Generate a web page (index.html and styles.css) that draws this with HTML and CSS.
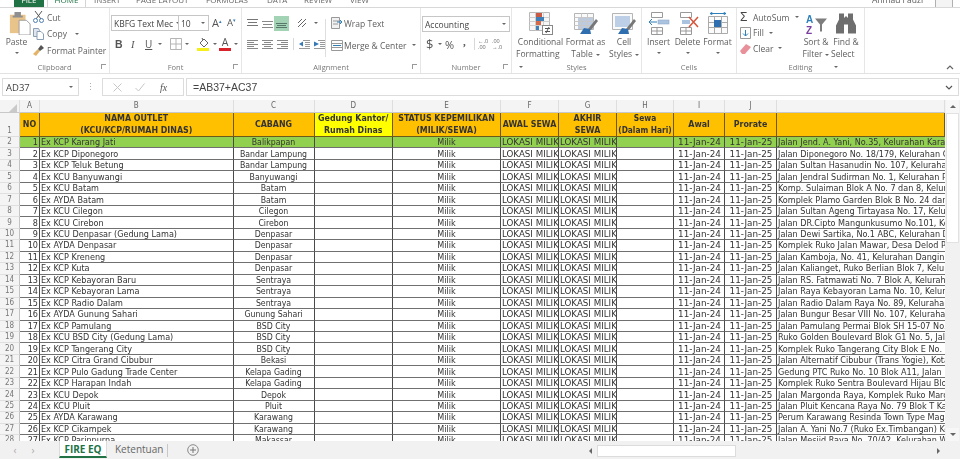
FILE: index.html
```html
<!DOCTYPE html>
<html lang="en">
<head>
<meta charset="utf-8">
<title>FIRE EQ - Excel</title>
<link rel="stylesheet" href="styles.css">
</head>
<body>
<div class="app">
  <header class="tabs">
    <span class="tab tab-file"><b>FILE</b></span>
    <span class="tab tab-home"><b>HOME</b></span>
    <span class="tab t-insert"><b>INSERT</b></span>
    <span class="tab t-page"><b>PAGE LAYOUT</b></span>
    <span class="tab t-form"><b>FORMULAS</b></span>
    <span class="tab t-data"><b>DATA</b></span>
    <span class="tab t-rev"><b>REVIEW</b></span>
    <span class="tab t-view"><b>VIEW</b></span>
    <span class="user"><b>Ahmad Fauzi</b></span>
    <span class="avatar"></span>
  </header>

  <section class="ribbon">
    <div class="group g-clip">
      <div class="body clip-body">
        <div class="big paste">
          <svg width="24" height="25" viewBox="0 0 24 25"><rect x="1" y="3" width="17" height="20" fill="#e9c48a"/><rect x="6" y="0" width="7" height="5" fill="#8f8f8f"/><rect x="4" y="4" width="11" height="2" fill="#8f8f8f"/><path d="M11 9h8l4 4v12H11z" fill="#fff" stroke="#9a9a9a"/></svg>
          <span>Paste</span><i class="caret"></i>
        </div>
        <div class="stack clip-stack">
          <div class="line"><svg width="11" height="12" viewBox="0 0 11 12"><path d="M2 0l6 8M9 0L3 8" stroke="#555" fill="none"/><circle cx="2.5" cy="9.5" r="2" fill="none" stroke="#4a7fb5"/><circle cx="8.5" cy="9.5" r="2" fill="none" stroke="#4a7fb5"/></svg><span>Cut</span></div>
          <div class="line"><svg width="11" height="12" viewBox="0 0 11 12"><path d="M.5.500h5l1 2v6h-6z" fill="#dfe6ee" stroke="#8a9fb5"/><path d="M4 3.500h4l2.500 2.500v5.500H4z" fill="#fff" stroke="#8a9fb5"/></svg><span>Copy</span><i class="caret c-copy"></i></div>
          <div class="line"><svg width="11" height="11" viewBox="0 0 11 11"><path d="M0 9l5-5 2 2-4 5z" fill="#e3b368"/><path d="M5 4l3-4 3 3-4 3z" fill="#555"/></svg><span>Format Painter</span></div>
        </div>
      </div>
      <div class="label">Clipboard<i class="launch"></i></div>
    </div>

    <div class="group g-font">
      <div class="body font-body">
        <div class="font-row1">
          <div class="combo font-name"><span>KBFG Text Mec</span><i class="caret"></i></div>
          <div class="combo font-size"><span>10</span><i class="caret"></i></div>
          <span class="grow-a">A<sup>▴</sup></span><span class="shrink-a">A<sup>▾</sup></span>
        </div>
        <div class="font-row2">
          <b class="fb">B</b><em class="fi">I</em><span class="fu">U</span><i class="caret"></i>
          <svg class="ic-border" width="12" height="12" viewBox="0 0 12 12"><path d="M.5.500h11v11H.5zM6 .5v11M.5 6h11" fill="none" stroke="#b5b5b5"/></svg><i class="caret"></i>
          <svg class="ic-fill" width="13" height="14" viewBox="0 0 13 14"><path d="M3 6l4-4 4 4-4 4z" fill="#fff" stroke="#666"/><path d="M5 1l1 2" stroke="#555"/><rect x="0" y="11" width="12" height="3" fill="#f5ef1c"/></svg><i class="caret"></i>
          <span class="fa">A<u></u></span><i class="caret"></i>
        </div>
      </div>
      <div class="label">Font<i class="launch"></i></div>
    </div>

    <div class="group g-align">
      <div class="body align-body">
        <div class="align-left">
          <div class="a-row">
            <svg width="11" height="11" viewBox="0 0 11 11"><path d="M0 1.500h11M1 4.500h9M0 7.500h11" stroke="#777"/></svg>
            <svg width="11" height="11" viewBox="0 0 11 11"><path d="M0 3.500h11M1 6.500h9M0 9.500h11" stroke="#888" /></svg>
            <span class="a-sel"><svg width="11" height="11" viewBox="0 0 11 11"><path d="M0 5.500h11M1 7.500h9M0 9.500h11" stroke="#56776a"/></svg></span>
            <svg class="a-orient" width="10" height="10" viewBox="0 0 10 10"><path d="M1 9l8-8M1 5l4-4M5 9l4-4" stroke="#666"/></svg><i class="caret"></i>
          </div>
          <div class="a-row a-row2">
            <svg width="11" height="11" viewBox="0 0 11 11"><path d="M0 1.500h11M0 3.500h7M0 5.500h11M0 7.500h7M0 9.500h11" stroke="#888"/></svg>
            <svg width="11" height="11" viewBox="0 0 11 11"><path d="M0 1.500h11M2 3.500h7M0 5.500h11M2 7.500h7M0 9.500h11" stroke="#888"/></svg>
            <svg width="11" height="11" viewBox="0 0 11 11"><path d="M0 1.500h11M4 3.500h7M0 5.500h11M4 7.500h7M0 9.500h11" stroke="#888"/></svg>
            <span class="a-sep"></span>
            <svg width="11" height="11" viewBox="0 0 11 11"><path d="M4 1.500h7M6 3.500h5M6 5.500h5M6 7.500h5M0 9.500h11" stroke="#999"/><path d="M0 5l4-2.500v5z" fill="#3478b8"/></svg>
            <svg width="11" height="11" viewBox="0 0 11 11"><path d="M4 1.500h7M6 3.500h5M6 5.500h5M6 7.500h5M0 9.500h11" stroke="#999"/><path d="M5 5L0 2.500v5z" fill="#3478b8"/></svg>
          </div>
        </div>
        <span class="v-sep"></span>
        <div class="stack wrap-stack">
          <div class="line"><svg width="12" height="12" viewBox="0 0 12 12"><path d="M.5.500h8v11h-8z" fill="#f1f1f1" stroke="#999"/><path d="M2 4h6M2 7h5" stroke="#999"/><path d="M6 5h5l-2-2M11 5L9 7" stroke="#2f7fb8" fill="none"/></svg><span>Wrap Text</span></div>
          <div class="line"><svg width="12" height="11" viewBox="0 0 12 11"><path d="M.5.500h11v10H.5zM.5 3.500h11M.5 7.500h11" fill="#fff" stroke="#999"/><path d="M2 5.500h8" stroke="#2f7fb8"/></svg><span>Merge &amp; Center</span><i class="caret c-merge"></i></div>
        </div>
      </div>
      <div class="label">Alignment<i class="launch"></i></div>
    </div>

    <div class="group g-num">
      <div class="body num-body">
        <div class="combo num-format"><span>Accounting</span><i class="caret"></i></div>
        <div class="num-row">
          <span class="n-dollar">$</span><i class="caret"></i><span class="n-pct">%</span><b class="n-comma">,</b><span class="a-sep n-sep"></span>
          <span class="n-dec"><i>←.0</i><i>.00</i></span><span class="n-dec"><i>.00</i><i>→.0</i></span>
        </div>
      </div>
      <div class="label">Number<i class="launch"></i></div>
    </div>

    <div class="group g-styles">
      <div class="body big-row styles-body">
        <div class="big w-cond">
          <svg width="24" height="23" viewBox="0 0 24 23"><path d="M.5.500h20v18H.5z" fill="#f7f7f7" stroke="#b8b8b8"/><path d="M.5 5.500h20M.5 9.500h20M.5 13.500h20M6.500.500v18M14.500.500v18" stroke="#cfcfcf"/><rect x="7" y="1" width="6" height="4" fill="#c95b45"/><rect x="7" y="5" width="8" height="4" fill="#3f7fb8"/><rect x="7" y="9" width="5" height="4" fill="#d56a4b"/><rect x="7" y="14" width="3" height="4" fill="#3f7fb8"/><rect x="13.500" y="13.500" width="10" height="9" fill="#fff" stroke="#888"/><path d="M16 16.500h5M16 19.500h5M20 15l-3 6" stroke="#555" fill="none"/></svg>
          <span>Conditional</span><span>Formatting<i class="caret"></i></span>
        </div>
        <div class="big w-fmt">
          <svg width="24" height="23" viewBox="0 0 24 23"><path d="M.5 1.500h19v16H.5z" fill="#fafafa" stroke="#b5b5b5"/><rect x="4" y="6" width="15" height="11" fill="#bccbe0"/><path d="M.5 5.500h19M.5 9.500h19M.5 13.500h19M7.500 1.500v16M13.500 1.500v16" stroke="#c8c8c8"/><path d="M14 17l8-10 2 2-7 9z" fill="#777"/><path d="M6 22l4-6 6 1 1 5z" fill="#2f6fb0"/></svg>
          <span>Format as</span><span>Table<i class="caret"></i></span>
        </div>
        <div class="big w-cell">
          <svg width="24" height="23" viewBox="0 0 24 23"><path d="M.5 1.500h20v16H.5z" fill="#fafafa" stroke="#b5b5b5"/><rect x="3" y="4" width="15" height="11" fill="#bccfe6"/><path d="M14 17l8-10 2 2-7 9z" fill="#777"/><path d="M6 22l4-6 6 1 1 5z" fill="#2f6fb0"/></svg>
          <span>Cell</span><span>Styles<i class="caret"></i></span>
        </div>
      </div>
      <div class="label">Styles</div>
    </div>

    <div class="group g-cells">
      <div class="body big-row cells-body">
        <div class="big w-ins">
          <svg width="22" height="23" viewBox="0 0 22 23"><path d="M3.500.500h11v5h-11zM3.500 15.500h11v7h-11zM9 15.500v7M3.500 19h11" fill="#fff" stroke="#999"/><rect x="10" y="8" width="11" height="4" fill="#a9c3e0" stroke="#8fa9c6" stroke-width=".6"/><path d="M9 10H1m3-3l-3 3 3 3" stroke="#2f7fb8" fill="none"/></svg>
          <span>Insert</span><i class="caret"></i>
        </div>
        <div class="big w-del">
          <svg width="22" height="23" viewBox="0 0 22 23"><path d="M3.500.500h11v5h-11zM3.500 15.500h11v7h-11zM9 15.500v7M3.500 19h11" fill="#fff" stroke="#999"/><rect x="5" y="8" width="8" height="4" fill="#a9c3e0"/><path d="M12 5l9 10M21 5l-9 10" stroke="#d5543a" stroke-width="1.500"/></svg>
          <span>Delete</span><i class="caret"></i>
        </div>
        <div class="big w-form">
          <svg width="22" height="23" viewBox="0 0 22 23"><path d="M1.500 4.500h19v17h-19zM7.500 4.500v17M14.500 4.500v17M1.500 10.500h19M1.500 15.500h19" fill="#fbfbfb" stroke="#aaa"/><rect x="7" y="8" width="7" height="7" fill="#2f6fb0"/><path d="M3 1.500h16M3 1.500l2-1v2zM19 1.500l-2-1v2z" stroke="#2f7fb8" fill="none"/></svg>
          <span>Format</span><i class="caret"></i>
        </div>
      </div>
      <div class="label">Cells</div>
    </div>

    <div class="group g-edit">
      <div class="body edit-body">
        <div class="stack edit-stack">
          <div class="line"><span class="sigma">Σ</span><span>AutoSum</span><i class="caret c-sum"></i></div>
          <div class="line"><svg width="11" height="12" viewBox="0 0 11 12"><path d="M.5.500h10v11H.5z" fill="#fff" stroke="#999"/><path d="M5.500 3v6M3 6.500l2.500 2.500L8 6.500" stroke="#2f7fb8" fill="none"/></svg><span>Fill</span><i class="caret"></i></div>
          <div class="line"><svg width="11" height="11" viewBox="0 0 11 11"><path d="M0 8l6-7 5 3-6 7H2z" fill="#e8919a"/></svg><span>Clear</span><i class="caret"></i></div>
        </div>
        <div class="big w-sort">
          <svg width="22" height="22" viewBox="0 0 22 22"><text x="1" y="10" class="az a">A</text><text x="1" y="21" class="az z">Z</text><path d="M10 6h12l-5 6v7h-2v-7z" fill="#7d7d7d"/></svg>
          <span>Sort &amp;</span><span>Filter<i class="caret"></i></span>
        </div>
        <div class="big w-find">
          <svg width="22" height="22" viewBox="0 0 22 22"><path d="M4 1h5v4h1v-1h2v1h1V1h5v6l3 6v8h-8v-9h-4v9H1v-8l3-6z" fill="#6e6e6e"/></svg>
          <span>Find &amp;</span><span>Select<i class="caret"></i></span>
        </div>
      </div>
      <div class="label">Editing</div>
    </div>

    <div class="collapse"><svg width="8" height="5" viewBox="0 0 8 5"><path d="M1 4l3-3 3 3" fill="none" stroke="#666" stroke-width="1.200"/></svg></div>
  </section>

  <section class="formula">
    <div class="namebox"><span>AD37</span><i class="caret"></i></div>
    <span class="dots">⋮</span>
    <div class="fx-box">
      <svg width="9" height="9" viewBox="0 0 9 9"><path d="M.5.500l8 8M8.500.500l-8 8" stroke="#c6c6c6"/></svg>
      <svg width="10" height="9" viewBox="0 0 10 9"><path d="M.5 5l3 3 6-7.500" stroke="#c6c6c6" fill="none"/></svg>
      <em>fx</em>
    </div>
    <div class="fbox"><span>=AB37+AC37</span><svg width="8" height="5" viewBox="0 0 8 5"><path d="M1 1l3 3 3-3" fill="none" stroke="#555" stroke-width="1.200"/></svg></div>
  </section>

  <main class="sheet-area">
    <div class="grid-wrap">
      <table class="sheet">
        <colgroup><col class="c0"><col class="ca"><col class="cb"><col class="cc"><col class="cd"><col class="ce"><col class="cf"><col class="cg"><col class="ch"><col class="ci"><col class="cj"><col class="ck"></colgroup>
        <thead>
          <tr class="letters"><th class="corner"><span class="tri"></span></th><th>A</th><th>B</th><th>C</th><th>D</th><th>E</th><th>F</th><th>G</th><th>H</th><th>I</th><th>J</th><th></th></tr>
          <tr class="head"><th class="rn">1</th><th>NO</th><th>NAMA OUTLET<br>(KCU/KCP/RUMAH DINAS)</th><th>CABANG</th><th class="yellow">Gedung Kantor/<br>Rumah Dinas</th><th>STATUS KEPEMILIKAN<br>(MILIK/SEWA)</th><th>AWAL SEWA</th><th>AKHIR<br>SEWA</th><th>Sewa<br>(Dalam Hari)</th><th>Awal</th><th>Prorate</th><th></th></tr>
        </thead>
        <tbody>
          <tr class="green"><th>2</th><td>1</td><td>Ex KCP Karang Jati</td><td>Balikpapan</td><td></td><td>Milik</td><td>LOKASI MILIK</td><td>LOKASI MILIK</td><td></td><td>11-Jan-24</td><td>11-Jan-25</td><td>Jalan Jend. A. Yani, No.35, Kelurahan Karang Jati</td></tr>
          <tr><th>3</th><td>2</td><td>Ex KCP Diponegoro</td><td>Bandar Lampung</td><td></td><td>Milik</td><td>LOKASI MILIK</td><td>LOKASI MILIK</td><td></td><td>11-Jan-24</td><td>11-Jan-25</td><td>Jalan Diponegoro No. 18/179, Kelurahan Gulak</td></tr>
          <tr><th>4</th><td>3</td><td>Ex KCP Teluk Betung</td><td>Bandar Lampung</td><td></td><td>Milik</td><td>LOKASI MILIK</td><td>LOKASI MILIK</td><td></td><td>11-Jan-24</td><td>11-Jan-25</td><td>Jalan Sultan Hasanudin No. 107, Kelurahan Kupang</td></tr>
          <tr><th>5</th><td>4</td><td>Ex KCU Banyuwangi</td><td>Banyuwangi</td><td></td><td>Milik</td><td>LOKASI MILIK</td><td>LOKASI MILIK</td><td></td><td>11-Jan-24</td><td>11-Jan-25</td><td>Jalan Jendral Sudirman No. 1, Kelurahan Pengantigan</td></tr>
          <tr><th>6</th><td>5</td><td>Ex KCU Batam</td><td>Batam</td><td></td><td>Milik</td><td>LOKASI MILIK</td><td>LOKASI MILIK</td><td></td><td>11-Jan-24</td><td>11-Jan-25</td><td>Komp. Sulaiman Blok A No. 7 dan 8, Kelurahan Batu</td></tr>
          <tr><th>7</th><td>6</td><td>Ex AYDA Batam</td><td>Batam</td><td></td><td>Milik</td><td>LOKASI MILIK</td><td>LOKASI MILIK</td><td></td><td>11-Jan-24</td><td>11-Jan-25</td><td>Komplek Plamo Garden Blok B No. 24 dan 25</td></tr>
          <tr><th>8</th><td>7</td><td>Ex KCU Cilegon</td><td>Cilegon</td><td></td><td>Milik</td><td>LOKASI MILIK</td><td>LOKASI MILIK</td><td></td><td>11-Jan-24</td><td>11-Jan-25</td><td>Jalan Sultan Ageng Tirtayasa No. 17, Kelurahan Jombang</td></tr>
          <tr><th>9</th><td>8</td><td>Ex KCU Cirebon</td><td>Cirebon</td><td></td><td>Milik</td><td>LOKASI MILIK</td><td>LOKASI MILIK</td><td></td><td>11-Jan-24</td><td>11-Jan-25</td><td>Jalan DR.Cipto Mangunkusumo No.101, Kelurahan</td></tr>
          <tr><th>10</th><td>9</td><td>Ex KCU Denpasar (Gedung Lama)</td><td>Denpasar</td><td></td><td>Milik</td><td>LOKASI MILIK</td><td>LOKASI MILIK</td><td></td><td>11-Jan-24</td><td>11-Jan-25</td><td>Jalan Dewi Sartika, No.1 ABC, Kelurahan Dauh Puri</td></tr>
          <tr><th>11</th><td>10</td><td>Ex AYDA Denpasar</td><td>Denpasar</td><td></td><td>Milik</td><td>LOKASI MILIK</td><td>LOKASI MILIK</td><td></td><td>11-Jan-24</td><td>11-Jan-25</td><td>Komplek Ruko Jalan Mawar, Desa Delod Peken</td></tr>
          <tr><th>12</th><td>11</td><td>Ex KCP Kreneng</td><td>Denpasar</td><td></td><td>Milik</td><td>LOKASI MILIK</td><td>LOKASI MILIK</td><td></td><td>11-Jan-24</td><td>11-Jan-25</td><td>Jalan Kamboja, No. 41, Kelurahan Dangin Puri</td></tr>
          <tr><th>13</th><td>12</td><td>Ex KCP Kuta</td><td>Denpasar</td><td></td><td>Milik</td><td>LOKASI MILIK</td><td>LOKASI MILIK</td><td></td><td>11-Jan-24</td><td>11-Jan-25</td><td>Jalan Kalianget, Ruko Berlian Blok 7, Kelurahan Kuta</td></tr>
          <tr><th>14</th><td>13</td><td>Ex KCP Kebayoran Baru</td><td>Sentraya</td><td></td><td>Milik</td><td>LOKASI MILIK</td><td>LOKASI MILIK</td><td></td><td>11-Jan-24</td><td>11-Jan-25</td><td>Jalan RS. Fatmawati No. 7 Blok A, Kelurahan Cilandak</td></tr>
          <tr><th>15</th><td>14</td><td>Ex KCP Kebayoran Lama</td><td>Sentraya</td><td></td><td>Milik</td><td>LOKASI MILIK</td><td>LOKASI MILIK</td><td></td><td>11-Jan-24</td><td>11-Jan-25</td><td>Jalan Raya Kebayoran Lama No. 10, Kelurahan Sukabumi</td></tr>
          <tr><th>16</th><td>15</td><td>Ex KCP Radio Dalam</td><td>Sentraya</td><td></td><td>Milik</td><td>LOKASI MILIK</td><td>LOKASI MILIK</td><td></td><td>11-Jan-24</td><td>11-Jan-25</td><td>Jalan Radio Dalam Raya No. 89, Kelurahan Gandaria</td></tr>
          <tr><th>17</th><td>16</td><td>Ex AYDA Gunung Sahari</td><td>Gunung Sahari</td><td></td><td>Milik</td><td>LOKASI MILIK</td><td>LOKASI MILIK</td><td></td><td>11-Jan-24</td><td>11-Jan-25</td><td>Jalan Bungur Besar VIII No. 107, Kelurahan Kemayoran</td></tr>
          <tr><th>18</th><td>17</td><td>Ex KCP Pamulang</td><td>BSD City</td><td></td><td>Milik</td><td>LOKASI MILIK</td><td>LOKASI MILIK</td><td></td><td>11-Jan-24</td><td>11-Jan-25</td><td>Jalan Pamulang Permai Blok SH 15-07 No. 8 Pamulang</td></tr>
          <tr><th>19</th><td>18</td><td>Ex KCU BSD City (Gedung Lama)</td><td>BSD City</td><td></td><td>Milik</td><td>LOKASI MILIK</td><td>LOKASI MILIK</td><td></td><td>11-Jan-24</td><td>11-Jan-25</td><td>Ruko Golden Boulevard Blok G1 No. 5, Jalan Pahlawan</td></tr>
          <tr><th>20</th><td>19</td><td>Ex KCP Tangerang City</td><td>BSD City</td><td></td><td>Milik</td><td>LOKASI MILIK</td><td>LOKASI MILIK</td><td></td><td>11-Jan-24</td><td>11-Jan-25</td><td>Komplek Ruko Tangerang City Blok E No. 12, Jalan</td></tr>
          <tr><th>21</th><td>20</td><td>Ex KCP Citra Grand Cibubur</td><td>Bekasi</td><td></td><td>Milik</td><td>LOKASI MILIK</td><td>LOKASI MILIK</td><td></td><td>11-Jan-24</td><td>11-Jan-25</td><td>Jalan Alternatif Cibubur (Trans Yogie), Kota Wisata</td></tr>
          <tr><th>22</th><td>21</td><td>Ex KCP Pulo Gadung Trade Center</td><td>Kelapa Gading</td><td></td><td>Milik</td><td>LOKASI MILIK</td><td>LOKASI MILIK</td><td></td><td>11-Jan-24</td><td>11-Jan-25</td><td>Gedung PTC Ruko No. 10 Blok A11, Jalan Perintis</td></tr>
          <tr><th>23</th><td>22</td><td>Ex KCP Harapan Indah</td><td>Kelapa Gading</td><td></td><td>Milik</td><td>LOKASI MILIK</td><td>LOKASI MILIK</td><td></td><td>11-Jan-24</td><td>11-Jan-25</td><td>Komplek Ruko Sentra Boulevard Hijau Blok C</td></tr>
          <tr><th>24</th><td>23</td><td>Ex KCU Depok</td><td>Depok</td><td></td><td>Milik</td><td>LOKASI MILIK</td><td>LOKASI MILIK</td><td></td><td>11-Jan-24</td><td>11-Jan-25</td><td>Jalan Margonda Raya, Komplek Ruko Margonda</td></tr>
          <tr><th>25</th><td>24</td><td>Ex KCU Pluit</td><td>Pluit</td><td></td><td>Milik</td><td>LOKASI MILIK</td><td>LOKASI MILIK</td><td></td><td>11-Jan-24</td><td>11-Jan-25</td><td>Jalan Pluit Kencana Raya No. 79 Blok T Kav 12</td></tr>
          <tr><th>26</th><td>25</td><td>Ex AYDA Karawang</td><td>Karawang</td><td></td><td>Milik</td><td>LOKASI MILIK</td><td>LOKASI MILIK</td><td></td><td>11-Jan-24</td><td>11-Jan-25</td><td>Perum Karawang Resinda Town Type Magnolia</td></tr>
          <tr><th>27</th><td>26</td><td>Ex KCP Cikampek</td><td>Karawang</td><td></td><td>Milik</td><td>LOKASI MILIK</td><td>LOKASI MILIK</td><td></td><td>11-Jan-24</td><td>11-Jan-25</td><td>Jalan A. Yani No.7 (Ruko Ex.Timbangan) Kelurahan</td></tr>
          <tr><th>28</th><td>27</td><td>Ex KCP Parinpurna</td><td>Makassar</td><td></td><td>Milik</td><td>LOKASI MILIK</td><td>LOKASI MILIK</td><td></td><td>11-Jan-24</td><td>11-Jan-25</td><td>Jalan Mesjid Raya No. 70/A2, Kelurahan Wajo</td></tr>
        </tbody>
      </table>
    </div>
    <aside class="vscroll">
      <div class="arrow"><i class="tri-up"></i></div>
      <div class="thumb"></div>
      <div class="spacer"></div>
      <div class="arrow"><i class="tri-down"></i></div>
    </aside>
  </main>

  <footer class="tabbar">
    <span class="nav">‹</span><span class="nav">›</span>
    <span class="sheet-tab active">FIRE EQ</span>
    <span class="sheet-tab">Ketentuan</span>
    <span class="tab-sep"></span>
    <svg class="plus" width="12" height="12" viewBox="0 0 12 12"><circle cx="6" cy="6" r="5.300" fill="none" stroke="#8a8a8a"/><path d="M3 6h6M6 3v6" stroke="#777"/></svg>
    <div class="hscroll">
      <i class="tri-left"></i>
      <div class="hthumb"></div>
      <i class="tri-right"></i>
    </div>
  </footer>
</div>
</body>
</html>
```

FILE: styles.css
```css
* { box-sizing: border-box; }
html, body { margin: 0; padding: 0; width: 960px; height: 459px; overflow: hidden; background: #fff; }
.app {
  width: 960px; height: 459px; display: flex; flex-direction: column; overflow: hidden;
  font-family: "Open Sans", "Noto Sans", sans-serif; font-size: 8.500px; color: #5c5c5c;
  filter: blur(.35px);
}
i { font-style: normal; }

/* title tabs (cut by the top edge) */
.tabs { height: 8px; flex: none; position: relative; display: flex; overflow: hidden; border-bottom: 1px solid #d8d8d8; }
.tab { height: 7px; line-height: 7px; font-size: 8px; flex: none; overflow: hidden; color: #666; }
.tab b { display: block; font-weight: 400; margin-top: -4px; }
.tab-file { margin-left: 14px; width: 30px; background: #217346; color: #fff; text-align: center; }
.tab-home { margin-left: 3px; width: 39px; text-align: center; color: #217346; border-left: 1px solid #d4d4d4; border-right: 1px solid #d4d4d4; height: 8px; background: #fff; position: relative; z-index: 1; }
.t-insert { margin-left: 8px; width: 42px; }
.t-page { width: 70px; }
.t-form { width: 61px; }
.t-data { width: 37px; }
.t-rev { width: 46px; }
.t-view { width: 30px; }
.user { margin-left: 492px; width: 62px; height: 7px; line-height: 7px; overflow: hidden; font-size: 8.500px; flex: none; }
.user b { display: block; font-weight: 400; margin-top: -4px; }
.avatar { width: 18px; height: 8px; border: 1px solid #b0b0b0; border-top: 0; flex: none; margin-left: 1px; background: #f4f4f4; }

/* ribbon */
.ribbon { height: 66px; flex: none; display: flex; background: #fff; border-bottom: 1px solid #e2e2e2; position: relative; }
.group { flex: none; display: flex; flex-direction: column; border-right: 1px solid #e6e6e6; height: 65px; }
.g-clip { width: 110px; } .g-font { width: 132px; } .g-align { width: 179px; } .g-num { width: 91px; } .g-styles { width: 130px; } .g-cells { width: 95px; } .g-edit { width: 128px; }
.body { flex: 1; min-height: 0; display: flex; }
.label { height: 12px; line-height: 12px; text-align: center; font-size: 7.500px; color: #777; position: relative; flex: none; }
.launch { position: absolute; right: 3px; top: 3px; width: 5px; height: 5px; border-left: 1px solid #999; border-top: 1px solid #999; }

.caret { display: inline-block; width: 0; height: 0; border-left: 2px solid transparent; border-right: 2px solid transparent; border-top: 2px solid #666; vertical-align: middle; margin-left: 3px; flex: none; }
.big { display: flex; flex-direction: column; align-items: center; line-height: 12px; color: #5e5e5e; flex: none; font-size: 8.500px; }
.big svg { height: 23px; flex: none; margin-bottom: 1px; }
.big .caret { margin-left: 3px; }
.big > .caret { margin: 4px 0 0; }
.stack { display: flex; flex-direction: column; }
.line { display: flex; align-items: center; gap: 2px; color: #5e5e5e; white-space: nowrap; }

/* clipboard */
.clip-body { padding: 4px 0 0 4px; }
.paste { width: 25px; }
.paste svg { align-self: flex-start; margin-left: 4px; margin-bottom: 1px; }
.clip-stack { margin: -1px 0 0 4px; gap: 4.500px; }
.clip-stack .line { height: 12px; gap: 3px; }
.c-copy { margin-left: 5px; }

/* font */
.font-body { flex-direction: column; padding: 7px 0 0 1px; }
.font-row1 { display: flex; align-items: center; height: 16px; }
.combo { display: flex; align-items: center; justify-content: space-between; height: 16px; border: 1px solid #c6c6c6; padding: 0 3px 0 2px; background: #fff; flex: none; color: #444; }
.font-name { width: 68px; font-size: 8.500px; white-space: nowrap; overflow: hidden; }
.font-size { width: 31px; margin-left: -1px; border-left-color: #c6c6c6; }
.grow-a, .shrink-a { font-size: 11px; color: #555; flex: none; line-height: 14px; }
.grow-a { margin-left: 3px; width: 15px; }
.shrink-a { font-size: 9.500px; width: 12px; }
.grow-a sup, .shrink-a sup { font-size: 5px; color: #3a7ab5; vertical-align: 4px; line-height: 0; }
.font-row2 { display: flex; align-items: center; height: 16px; margin-top: 5px; color: #555; }
.fb { margin-left: 4px; width: 13px; font-size: 10.500px; font-family: "Liberation Sans", sans-serif; }
.fi { width: 17px; font-size: 10.500px; padding-left: 3px; font-family: "Liberation Serif", serif; }
.fu { font-size: 10px; width: 10px; text-decoration: underline; }
.ic-border { margin-left: 8px; }
.ic-fill { margin-left: 8px; }
.fa { margin-left: 2px; width: 12px; font-size: 10.500px; line-height: 11px; text-align: center; color: #555; display: flex; flex-direction: column; }
.fa u { display: block; height: 3px; background: #d8232a; }

/* alignment */
.align-body { padding: 7px 0 0 5px; }
.align-left { width: 78px; flex: none; }
.a-row { display: flex; align-items: center; gap: 4px; height: 16px; }
.a-sel { width: 15px; height: 15px; background: #a3d3b5; display: flex; align-items: center; justify-content: center; margin-left: -3px; }
.a-orient { margin-left: 4px; }
.a-row2 { margin-top: 5px; }
.a-sep { width: 1px; height: 12px; background: #d8d8d8; flex: none; margin: 0 1px; }
.v-sep { width: 1px; height: 38px; background: #dedede; flex: none; margin: 4px 5px 0 0; }
.wrap-stack { padding-top: 2px; gap: 10px; }
.wrap-stack .line { height: 12px; gap: 1px; font-size: 8.500px; }
.c-merge { margin-left: 4px; }

/* number */
.num-body { flex-direction: column; padding: 8px 0 0 1px; }
.num-format { width: 88px; height: 16px; }
.num-row { display: flex; align-items: center; height: 16px; margin-top: 4px; padding-left: 4px; color: #555; }
.n-dollar { font-size: 13px; width: 9px; }
.n-pct { font-size: 11px; margin-left: 3px; width: 14px; }
.n-comma { font-size: 11px; line-height: 8px; height: 12px; width: 7px; margin-left: 4px; font-family: "Liberation Serif", serif; }
.n-sep { margin-left: 4px; margin-right: 3px; }
.n-dec { display: flex; flex-direction: column; font-size: 5.500px; line-height: 6px; width: 14px; color: #666; white-space: nowrap; overflow: hidden; }

/* styles, cells */
.big-row { padding-top: 4px; }
.styles-body { padding-left: 4px; }
.w-cond { width: 49px; }
.w-fmt { width: 41px; }
.w-cell { width: 30px; margin-left: 3px; }
.cells-body { padding-left: 2px; }
.w-ins { width: 29px; }
.w-del { width: 29px; }
.w-form { width: 31px; }

/* editing */
.edit-body { padding-top: 4px; }
.edit-stack { width: 64px; padding-left: 3px; margin-top: -1px; gap: 3.500px; flex: none; }
.edit-stack .line { height: 12px; }
.sigma { font-size: 12px; color: #444; width: 11px; line-height: 12px; font-family: "Liberation Sans", sans-serif; }
.c-sum { margin-left: 4px; }
.w-sort { width: 30px; }
.w-find { width: 30px; }
.az { font: 700 10px "Liberation Sans", sans-serif; }
.az.a { fill: #2f7fb8; }
.az.z { fill: #7a3fa0; }
.collapse { position: absolute; right: 6px; top: 57px; line-height: 0; }

/* formula bar */
.formula { height: 20px; flex: none; margin-top: 4px; display: flex; align-items: stretch; padding-left: 2px; color: #444; }
.namebox { width: 77px; height: 18px; border: 1px solid #dcdcdc; display: flex; align-items: center; justify-content: space-between; padding: 0 5px 0 3px; font-size: 9.500px; }
.dots { width: 23px; text-align: center; color: #aaa; line-height: 18px; }
.fx-box { width: 82px; height: 18px; border: 1px solid #dcdcdc; display: flex; align-items: center; gap: 13px; padding-left: 10px; }
.fx-box em { font: italic 10px "Liberation Serif", serif; color: #555; margin-left: 2px; }
.fbox { flex: none; width: 773px; height: 18px; margin-left: 2px; border: 1px solid #dcdcdc; display: flex; align-items: center; justify-content: space-between; padding: 0 5px 0 6px; font-size: 10.500px; font-family: "Liberation Sans", sans-serif; }

/* sheet */
.sheet-area { height: 341px; flex: none; margin-top: 2px; display: flex; overflow: hidden; }
.grid-wrap { width: 945px; height: 341px; overflow: hidden; flex: none; }
.sheet { table-layout: fixed; width: 945px; border-collapse: separate; border-spacing: 0; font-family: "DejaVu Sans", sans-serif; font-stretch: condensed; font-size: 9px; color: #333; }
.c0 { width: 20px; } .ca { width: 20px; } .cb { width: 193.500px; } .cc { width: 81px; } .cd { width: 78.500px; } .ce { width: 108px; } .cf { width: 58px; } .cg { width: 58px; } .ch { width: 57px; } .ci { width: 51px; } .cj { width: 52px; } .ck { width: 168px; }
.sheet th, .sheet td { padding: 0 1px; overflow: hidden; white-space: nowrap; font-weight: 400; line-height: 10px; }
.letters th { height: 13px; background: #f4f4f4; color: #666; text-align: center; font-size: 8px; border-right: 1px solid #dedede; border-bottom: 1px solid #c8c8c8; padding: 0; }
.corner { position: relative; }
.tri { display: block; width: 0; height: 0; margin: 3px 0 0 9px; border-left: 8px solid transparent; border-bottom: 8px solid #c9c9c9; }
.head th { height: 23px; background: #ffc000; color: #333; font-weight: 700; text-align: center; border-right: 1px solid #6b5a1a; border-bottom: 1px solid #6b5a1a; line-height: 11.500px; font-size: 8.800px; }
.head th.rn { background: #f4f4f4; color: #777; font-weight: 400; vertical-align: bottom; border-right: 1px solid #cfcfcf; border-bottom: 1px solid #dedede; line-height: 10px; font-size: 8px; }
.head th.yellow { background: #ffff00; }
.head th:nth-child(9) { font-size: 8.300px; }
tbody tr { height: 11.480px; }
tbody th { background: #f4f4f4; color: #777; text-align: center; font-size: 8px; border-right: 1px solid #c4c4c4; border-bottom: 1px solid #e0e0e0; padding: 0; }
tbody td { border-right: 1px solid #4a4a4a; border-bottom: 1px solid #707070; text-align: center; height: 11.480px; }
tbody td:nth-child(2) { text-align: right; }
tbody td:nth-child(3), tbody td:nth-child(12) { text-align: left; }
tbody td:nth-child(4) { font-size: 8.700px; }
tbody td:nth-child(7), tbody td:nth-child(8) { text-align: left; font-stretch: normal; font-size: 8.700px; padding-right: 0; }
tbody td:nth-child(10), tbody td:nth-child(11) { font-stretch: normal; font-size: 8.800px; padding: 0 0 0 1px; }
tbody td:nth-child(12) { border-right: 0; }
.green td { background: #92d050; }
.vscroll { width: 15px; flex: none; height: 341px; display: flex; flex-direction: column; background: #f1f1f1; align-items: stretch; padding: 0 1px 0 1px; border-left: 0; }
.arrow { height: 13px; flex: none; display: flex; align-items: center; justify-content: center; background: #f7f7f7; }
.thumb { height: 130px; flex: none; background: #fff; border: 1px solid #e2e2e2; }
.spacer { flex: 1; }
.tri-up { width: 0; height: 0; border-left: 3px solid transparent; border-right: 3px solid transparent; border-bottom: 3px solid #666; }
.tri-down { width: 0; height: 0; border-left: 3px solid transparent; border-right: 3px solid transparent; border-top: 3px solid #666; }

/* bottom tabs */
.tabbar { flex: 1; min-height: 0; background: #f1f1f1; display: flex; align-items: flex-start; font-size: 10px; color: #555; position: relative; }
.nav { width: 18px; margin-top: 2px; text-align: center; color: #aaa; font-size: 10px; line-height: 14px; flex: none; }
.nav:first-child { margin-left: 6px; }
.sheet-tab { height: 17px; line-height: 17px; flex: none; text-align: center; margin-left: 8px; width: 44px; font-size: 10px; color: #666; }
.sheet-tab.active { margin-left: 17px; width: 48px; background: #fff; color: #217346; font-weight: 700; border-bottom: 2px solid #217346; border-left: 1px solid #dcdcdc; border-right: 1px solid #dcdcdc; }
.tab-sep { width: 1px; height: 13px; background: #c8c8c8; margin: 3px 0 0 8px; flex: none; }
.plus { margin: 3px 0 0 19px; flex: none; }
.hscroll { position: absolute; left: 587px; top: 4px; width: 358px; height: 12px; display: flex; align-items: center; }
.tri-left { width: 0; height: 0; border-top: 3px solid transparent; border-bottom: 3px solid transparent; border-right: 3px solid #666; margin-left: 2px; flex: none; }
.tri-right { width: 0; height: 0; border-top: 3px solid transparent; border-bottom: 3px solid transparent; border-left: 3px solid #666; margin-left: auto; margin-right: 5px; flex: none; }
.hthumb { width: 139px; height: 12px; margin-left: 5px; background: #fff; border: 1px solid #dcdcdc; flex: none; }
```
